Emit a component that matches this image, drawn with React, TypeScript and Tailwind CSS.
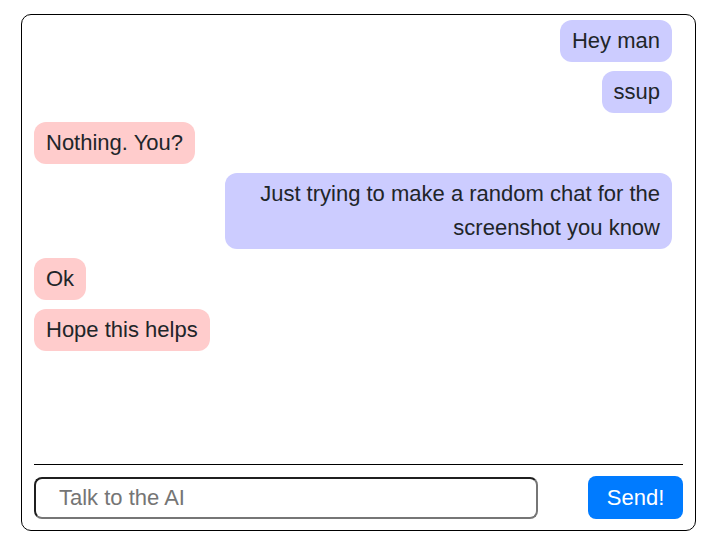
import React from "react";

type Msg = { from: "me" | "ai"; text: string };

const messages: Msg[] = [
  { from: "me", text: "Hey man" },
  { from: "me", text: "ssup" },
  { from: "ai", text: "Nothing. You?" },
  { from: "me", text: "Just trying to make a random chat for the screenshot you know" },
  { from: "ai", text: "Ok" },
  { from: "ai", text: "Hope this helps" },
];

export default function App() {
  return (
    <div
      className="pl-[21px] pt-[14px] bg-white"
      style={{ fontFamily: '"Liberation Sans", Arial, sans-serif' }}
    >
      <div className="w-[675px] h-[517px] border border-black rounded-[10px] flex flex-col pl-[12px] pr-[12px] pb-[11px]">
        <div className="flex-1 flex flex-col gap-[9px] pt-[5px] pr-[11px]">
          {messages.map((m, i) => (
            <div
              key={i}
              className={
                m.from === "me"
                  ? "self-end max-w-[447px] bg-[#ccccff] text-[#212529] text-[22px] leading-[34px] px-[12px] py-[4px] rounded-[12px] text-right"
                  : "self-start max-w-[447px] bg-[#ffcccc] text-[#212529] text-[22px] leading-[34px] px-[12px] py-[4px] rounded-[12px]"
              }
            >
              {m.text}
            </div>
          ))}
        </div>
        <div className="h-px bg-black" />
        <div className="flex items-center justify-between mt-[11px] h-[43px]">
          <input
            type="text"
            placeholder="Talk to the AI"
            className="w-[504px] h-[42px] border-2 border-t-[#1f1f1f] border-l-[#1f1f1f] border-b-[#767676] border-r-[#767676] rounded-[8px] pl-[23px] text-[22px] text-[#212529] placeholder:text-[#757575] outline-none bg-white"
          />
          <button className="w-[95px] h-[43px] bg-[#007bff] text-white text-[22px] rounded-[8px]">
            Send!
          </button>
        </div>
      </div>
    </div>
  );
}
